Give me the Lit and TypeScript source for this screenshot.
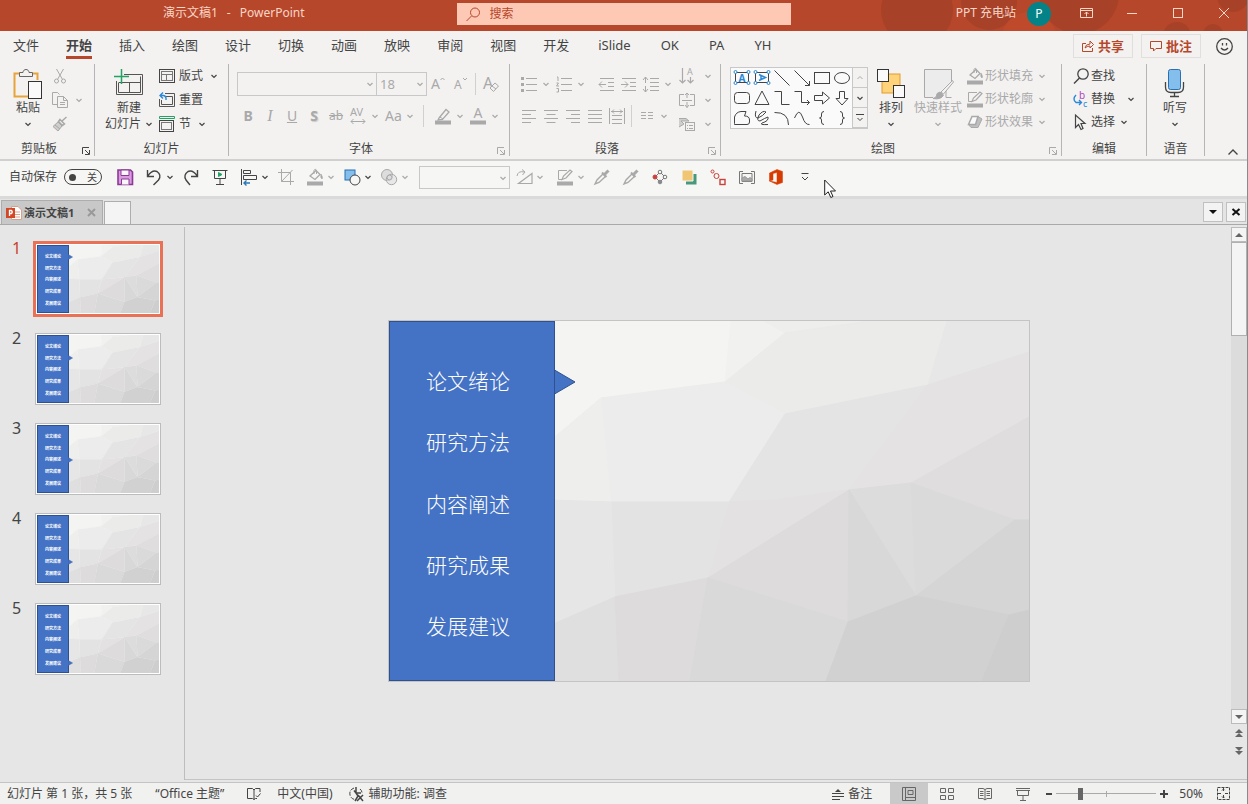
import { LitElement, html, svg, css, nothing, TemplateResult } from "lit";
import { customElement, property, state } from "lit/decorators.js";
import { classMap } from "lit/directives/class-map.js";

type Art = ReturnType<typeof svg>;

const icon = (w: number, h: number, art: Art) =>
  html`<svg class="ic" width=${w} height=${h} viewBox="0 0 ${w} ${h}" aria-hidden="true">${art}</svg>`;
const i16 = (art: Art) => icon(16, 16, art);
const chev = html`<svg class="chev" width="8" height="8" viewBox="0 0 8 8" aria-hidden="true"><path d="M1.5 3L4 5.5L6.5 3"/></svg>`;

/* ---- ribbon artwork ---- */
const art = {
  paste: svg`<path d="M9 5.500H2.500V28.500H16M21 5.500H25.500V12" stroke="#e8a33d" stroke-width="2"/><path d="M7.500 8.500V4.500H11C11 0.500 17 0.500 17 4.500H20.500V8.500Z" fill="#f3f2f1" stroke="#666"/><rect x="16.500" y="13.500" width="13" height="17" fill="#fafafa" stroke="#333"/>`,
  cut: svg`<path d="M4.500 1L10.500 11.500M11.500 1L5.500 11.500"/><circle cx="4.500" cy="13" r="2"/><circle cx="11.500" cy="13" r="2"/>`,
  copy: svg`<path d="M5 12.500H0.500V0.500H5.500L7.500 2.500"/><path d="M5.500 4.500H11.500L15.500 8.500V15.500H5.500ZM11.500 4.500V8.500H15.500M8 10.500H13M8 12.500H13"/>`,
  brush: svg`<path d="M14.500 1L10 5M8 3.500L12.500 8L10.500 9.500L6.500 5.500Z" stroke-width="1.500"/><path d="M6 6L10 10L6 15L1 10.500Z" fill="currentColor" fill-opacity=".5"/><path d="M3 9L8 13"/>`,
  newSlide: svg`<path d="M11 6.500H29.500V26.500H3.500V13M27.500 8.500V24.500H5.500V15M5.500 14.500H27.500M16.500 14.500V24.500" stroke="#555"/><path d="M8.500 1V16M1 8.500H16" stroke="#21a366" stroke-width="1.500"/>`,
  layout: svg`<rect x=".5" y="1.500" width="15" height="13" stroke="#444"/><rect x="2.500" y="3.500" width="11" height="9" stroke="#777"/><path d="M3 6.500H13M7.500 6.500V12" stroke="#777"/>`,
  reset: svg`<path d="M6 1.500H15.500V14.500H.5V7M7 4.500H13.500V12.500H2.500V8" stroke="#555"/><path d="M4 .5L1 3.500L4 6.500M1 3.500H4.500Q7.500 4 7 8" stroke="#2b88d8" stroke-width="1.400"/>`,
  section: svg`<path d="M.5 .5H15.500V2.500H.5Z" stroke="#21a366"/><rect x=".5" y="4.500" width="14" height="11" stroke="#444"/><rect x="2.500" y="6.500" width="10" height="7" stroke="#777"/>`,
  growA: svg`<text x="0" y="13" font-size="14">A</text><path d="M9.500 4L11.500 2L13.500 4"/>`,
  shrinkA: svg`<text x="1" y="13" font-size="12">A</text><path d="M10 2L12 4L14 2"/>`,
  clearA: svg`<text x="0" y="13" font-size="16">A</text><path d="M7 12L12 7L15.500 10L10.500 15.500Z" fill="#f3f2f1"/><path d="M9 10L13 13"/>`,
  av: svg`<text x="0" y="8" font-size="11">AV</text><path d="M1 13.500H15M3.500 11L1 13.500L3.500 16M12.500 11L15 13.500L12.500 16"/>`,
  marker: svg`<path d="M4 10L11 1.500L14 4L7.500 11.500L3 12Z" stroke-width="1.300"/><path d="M5 9L8 11"/><path d="M0 14.500H16" stroke-width="4"/>`,
  fontColor: svg`<text x="3.500" y="10" font-size="14">A</text><path d="M0 14.500H16" stroke-width="4"/>`,
  bullets: svg`<path d="M5 2.500H16M5 8.500H16M5 14.500H16"/><path d="M0 2.500H3M0 8.500H3M0 14.500H3" stroke-width="3"/>`,
  numbers: svg`<path d="M5 2.500H16M5 8.500H16M5 14.500H16"/><path d="M1 1H2V5M.5 7H2.500L.5 10H3M.5 12.500H2.500V16H.5"/>`,
  outdent: svg`<path d="M1 2.500H15M9 6.500H15M9 10.500H15M1 14.500H15M0 8.500H7M3 5.500L0 8.500L3 11.500"/>`,
  indent: svg`<path d="M1 2.500H15M9 6.500H15M9 10.500H15M1 14.500H15M0 8.500H7M4 5.500L7 8.500L4 11.500"/>`,
  spacing: svg`<path d="M7 2.500H16M7 6.500H16M7 10.500H16M7 14.500H16M2.500 1V7M2.500 10V16M0 4L2.500 1L5 4M0 13L2.500 16L5 13"/>`,
  left: svg`<path d="M1 2.500H15M1 6.500H10M1 10.500H15M1 14.500H10"/>`,
  center: svg`<path d="M1 2.500H15M3.500 6.500H12.500M1 10.500H15M3.500 14.500H12.500"/>`,
  right: svg`<path d="M1 2.500H15M6 6.500H15M1 10.500H15M6 14.500H15"/>`,
  justify: svg`<path d="M1 2.500H15M1 6.500H15M1 10.500H15M1 14.500H15"/>`,
  distribute: svg`<path d="M.5 0V16M15.500 0V16M3 7.500H13M3 11.500H13M3 15.500H13M2 3.500H14M5 1.500L3 3.500L5 5.500M11 1.500L13 3.500L11 5.500"/>`,
  columns: svg`<path d="M2 4.500H7M2 7.500H7M2 10.500H7M9 4.500H14M9 7.500H14M9 10.500H14"/>`,
  textDir: svg`<path d="M3.500 0V15M.5 12L3.500 15L6.500 12M11.500 9V15M8.500 12L11.500 15L14.500 12" stroke-width="1.200"/><text x="8" y="7" font-size="9">A</text>`,
  alignText: svg`<path d="M5 2.500H.5V13.500H5M11 2.500H15.500V13.500H11M3 8.500H13M8 1V6M6 3L8 1L10 3M8 10V15.500M6 13L8 15.500L10 13"/>`,
  smartArt: svg`<path d="M0 2.500H7L10 5H2L5 8L0 11" fill="currentColor" fill-opacity=".5"/><rect x="6.500" y="6.500" width="9" height="8" fill="#f3f2f1"/><path d="M8 9.500H9M8 12.500H9M10 9.500H14M10 12.500H14"/>`,
  arrange: svg`<rect x="7" y="6" width="18" height="19" fill="#ffd37a" stroke="#e39a2e"/><rect x="2.500" y="1.500" width="11" height="12" fill="#fafafa" stroke="#333"/><rect x="18.500" y="17.500" width="11" height="12" fill="#fafafa" stroke="#333"/>`,
  quick: svg`<path d="M11 29.500H2.500V1.500H29.500V13" fill="#ececec"/><path d="M29.500 29.500H24V22"/><path d="M30.500 12.500L19 24L21.500 26L31.500 14Z" fill="#f3f2f1"/><path d="M18 24Q14 25 14.500 28Q13 30 11 30.500Q19 32 21.500 27Z" fill="currentColor"/>`,
  fill: svg`<path d="M3 7L9 1.500L13 5.500L8 10.500Z" stroke-width="1.300"/><path d="M7 5V1.500Q8.500 -1.500 9.500 2.500V5"/><path d="M14 5Q16.500 9 15 10Q13 9 14 5Z" fill="currentColor" stroke-width=".6"/><path d="M0 14.500H16" stroke-width="4"/>`,
  outline: svg`<path d="M10 1.500H1.500V10.500H5"/><path d="M5 10.500L6.500 7L13 1L15 2.500L9 9Z" stroke-width="1.200"/><path d="M0 14.500H16" stroke-width="4"/>`,
  effect: svg`<path d="M11 2.500L15 5L11 13.500H4L1.500 10.500H8.500Z" fill="currentColor" fill-opacity=".7"/><path d="M5 2.500H11L8.500 10.500H1.500Z" fill="#fafafa" stroke-width="1.500"/>`,
  find: svg`<circle cx="10" cy="6" r="5.200" stroke="#444" stroke-width="1.300"/><path d="M6.500 10L1 15.500" stroke="#444" stroke-width="1.400"/>`,
  replace: svg`<text x="6" y="8" font-size="10" fill="#b146c2">b</text><text x="10" y="15.500" font-size="9" fill="#2b88d8">c</text><path d="M3 4Q-1 8 3 11.500H8M6 9L8.500 11.500L6 14" stroke="#2b88d8" stroke-width="1.400"/>`,
  select: svg`<path d="M2.500 1V13.500L5.500 10.500L8 15.500L10 14.500L8 9.500H12Z" stroke="#444" stroke-width="1.200"/>`,
  mic: svg`<rect x="9.500" y="1.500" width="12" height="20" rx="2" fill="#83beec" stroke="#2a6fb0"/><path d="M6.500 14V19Q6.500 24.500 12 24.500H19Q24.500 24.500 24.500 19V14M15.500 25V28M11 28.500H20" stroke="#444" stroke-width="1.300"/>`,
  launcher: svg`<path d="M7 .5H.5V7M3 3L7 7M7.500 3V7.500H3"/>`,
};

/* ---- quick access artwork ---- */
const quick = {
  save: svg`<path d="M1 1H13.500L15.500 3V15.500H1Z" fill="#d99ae0" stroke="#8a3a94" stroke-width="1.600"/><path d="M4 1H12V6.500H4ZM4.500 15.500V10H12V15.500" fill="#fbf6fb" stroke="#8a3a94"/>`,
  undo: svg`<path d="M1.500 1V7.500H8M1.500 7.500Q6 .5 11 2.500Q16 6 12.500 11L7.500 16" stroke="#444" stroke-width="1.400"/>`,
  redo: svg`<path d="M14.500 1V7.500H8M14.500 7.500Q10 .5 5 2.500Q0 6 3 11L7 16" stroke="#444" stroke-width="1.400"/>`,
  show: svg`<path d="M.5 1.500H15.500M2.500 1.500V9.500H13.500V1.500M8 10V15.500M4 15.500H12" stroke="#444"/><path d="M6.500 3.500L10 5.500L6.500 7.500Z" fill="#21a366" stroke="#21a366"/>`,
  align: svg`<path d="M.5 0V16" stroke="#444"/><path d="M2.500 1.500H9.500V4.500H2.500ZM2.500 6.500H15.500V10.500H2.500Z" stroke="#444"/><path d="M3 14H9M5.500 11.500L3 14L5.500 16.500" stroke="#2b78b8" stroke-width="1.400"/>`,
  crop: svg`<path d="M3.500 0V12.500H16M0 3.500H12.500V16M14.500 1L3.500 12.500"/>`,
  shapes: svg`<rect x="1" y="1" width="10" height="10" fill="#83beec" stroke="#2a6fb0"/><circle cx="11" cy="11" r="5" fill="#f6f6f5" stroke="#444"/>`,
  merge: svg`<circle cx="6" cy="6" r="5.500" fill="#ddd"/><circle cx="10.500" cy="10.500" r="5.200" fill="#ddd" fill-opacity=".6"/><circle cx="8.500" cy="8.500" r="2.500"/>`,
  rotate: svg`<path d="M16 4.500V14.500H2.500Z" stroke-width="1.200"/><path d="M1 7Q2 1.500 8 3M6 .5L9 3L6.500 6"/>`,
  dropper: svg`<path d="M1 15L3 11L9 5L11.500 7.500L5 13.500Z" stroke-width="1.400"/><path d="M8 3.500L12.500 8" stroke-width="2"/><path d="M10.500 5.500L14.500 1.500" stroke-width="3"/>`,
  nodes: svg`<path d="M8 3L13 8L8 13L3 8Z" stroke="#777"/><circle cx="8" cy="3" r="1.800" fill="#f6f6f5" stroke="#777"/><circle cx="3" cy="8" r="2" fill="#c8413b" stroke="#c8413b"/><circle cx="13" cy="8" r="1.800" fill="#f6f6f5" stroke="#777"/><circle cx="8" cy="13" r="1.800" fill="#888" stroke="#888"/>`,
  layers: svg`<path d="M5 5H15.500V15.500H5Z" fill="#47997c" stroke="none"/><path d="M1 1H12V12H1Z" fill="#f0c674" stroke="#f6f6f5"/>`,
  chain: svg`<path d="M3 3L12 12" stroke="#ddd"/><circle cx="2.500" cy="2.500" r="1.500" fill="#f6f6f5" stroke="#c8413b"/><circle cx="6.500" cy="7" r="2.500" fill="#f6f6f5" stroke="#c8413b"/><rect x="10" y="10.500" width="5" height="5" fill="#f6f6f5" stroke="#c8413b" stroke-width="1.400"/>`,
  picture: svg`<path d="M4 2.500H.5V14.500H4M12 2.500H15.500V14.500H12M3 4.500H13V12.500H3Z" stroke="#777"/><path d="M3 12V9L6 7.500L9 10L11 8.500L13 10V12Z" fill="#aaa" stroke="#999"/>`,
  office: svg`<path d="M1.500 4L9 .5L14.500 2.500V13.500L9 15.500L1.500 12L9 13.500V3.500L5 4.500V11L1.500 12Z" fill="#d83b01" stroke="#d83b01" stroke-width=".5"/>`,
  more: svg`<path d="M4.500 4.500H11.500M5 8L8 11L11 8" stroke="#444"/>`,
};

const handles = svg`<g fill="#fafafa" stroke="#2b88d8"><circle cx="2.500" cy="3" r="1.500"/><circle cx="15.500" cy="3" r="1.500"/><circle cx="2.500" cy="14" r="1.500"/><circle cx="15.500" cy="14" r="1.500"/></g>`;
const shapeArt: Art[] = [
  svg`<rect x="2.500" y="3.500" width="13" height="10"/><text x="5.500" y="12.500" font-size="10" fill="#2b88d8" font-weight="700">A</text>${handles}`,
  svg`<rect x="2.500" y="3.500" width="13" height="10"/><path d="M6 5.500L12.500 8.500L6 11.500M8 6.500V10.500" stroke="#2b88d8" stroke-width="1.500"/>${handles}`,
  svg`<path d="M1.500 1.500L16.500 16.500"/>`,
  svg`<path d="M1.500 1.500L16.500 16.500M16.500 12V16.500H12"/>`,
  svg`<rect x="1.500" y="3.500" width="15" height="11"/>`,
  svg`<ellipse cx="9" cy="9" rx="7.500" ry="5.500"/>`,
  svg`<rect x="1.500" y="3.500" width="15" height="11" rx="3"/>`,
  svg`<path d="M9 2L16 15.500H2Z"/>`,
  svg`<path d="M1.500 2.500H8.500V15.500H16.500"/>`,
  svg`<path d="M1.500 2.500H8.500V13.500H16.500M14 11L16.500 13.500L14 16"/>`,
  svg`<path d="M1.500 6.500H9.500V3L16.500 9L9.500 15V11.500H1.500Z"/>`,
  svg`<path d="M6.500 2.500H11.500V9.500H15L9 16L3 9.500H6.500Z"/>`,
  svg`<path d="M1.500 14.500V8Q3 3 8 2.500H13L11.500 7Q16.500 7 16.500 11V13Q16.500 15.500 14 15.500H1.500Z"/>`,
  svg`<path d="M3 2Q1 9 5 9Q10 7 13 3Q10 1 6 6Q3 12 7 12Q12 9 15 8Q16 12 9 14Q6 16 15 15.500"/>`,
  svg`<path d="M1.500 3.500Q15.500 3 15.500 16"/>`,
  svg`<path d="M1.500 9Q6 -2 9.500 8Q12 16 16.500 15.500"/>`,
  svg`<path d="M11 2.500Q8.500 2.500 8.500 5V7Q8.500 9 6.500 9Q8.500 9 8.500 11V13Q8.500 15.500 11 15.500"/>`,
  svg`<path d="M7 2.500Q9.500 2.500 9.500 5V7Q9.500 9 11.500 9Q9.500 9 9.500 11V13Q9.500 15.500 7 15.500"/>`,
];

const facets: [string, string][] = [
  ["160,0 342,0 336,61 212,77 160,121", "#f4f4f2"],
  ["342,0 375,0 396,12 336,61", "#f1f1f0"],
  ["375,0 480,0 396,12", "#eeeeed"],
  ["336,61 396,12 480,0 558,0 539,64 396,93", "#ebebea"],
  ["558,0 640,0 640,31 539,64", "#e7e7e7"],
  ["212,77 336,61 396,93 340,181 222,181", "#ececec"],
  ["160,121 212,77 222,181 160,179", "#eeeeed"],
  ["396,93 539,64 460,169 386,179 340,181", "#e4e4e4"],
  ["539,64 640,31 640,96 522,162 460,169", "#e4e2e3"],
  ["640,96 640,199 626,199 522,162", "#dfddde"],
  ["340,181 386,179 460,169 319,257", "#e3e1e2"],
  ["222,181 340,181 319,257 226,276", "#e3e3e3"],
  ["160,179 222,181 226,276 160,305", "#e6e6e6"],
  ["319,257 460,169 459,301", "#dddbdc"],
  ["460,169 522,162 527,275", "#dddcdc"],
  ["460,169 527,275 459,301", "#d9d8d9"],
  ["522,162 626,199 527,275", "#dbdadb"],
  ["626,199 640,199 640,289 620,294 527,275", "#d5d5d5"],
  ["160,305 226,276 230,360 160,360", "#e0dfdf"],
  ["226,276 319,257 301,360 230,360", "#dddbdc"],
  ["319,257 459,301 437,360 301,360", "#d9d9d9"],
  ["459,301 527,275 620,294 593,360 437,360", "#d1d1d1"],
  ["620,294 640,289 640,360 593,360", "#cecece"],
];

const chapters = ["论文绪论", "研究方法", "内容阐述", "研究成果", "发展建议"];

@customElement("deck-slide")
export class DeckSlide extends LitElement {
  @property({ type: Number }) active = 0;
  @property({ type: Boolean, reflect: true }) small = false;

  static styles = css`
    :host { display: grid; aspect-ratio: 16 / 9; font: 300 21px/30px "Noto Sans CJK SC", sans-serif; overflow: hidden; }
    .backdrop, .nav { grid-area: 1 / 1; }
    .backdrop { width: 100%; height: 100%; display: block; min-height: 0; }
    .nav {
      box-sizing: border-box; width: 26%; margin: 0; padding: 30px 0 22px; list-style: none;
      display: flex; flex-direction: column; background: #4472c4; border: 1px solid #2f528f; color: #fff; z-index: 1;
    }
    .item { flex: 1; display: flex; align-items: center; padding: 0 0 4px 36px; position: relative; }
    .arrow { position: absolute; left: 100%; top: 0; bottom: 0; margin: auto 0; width: 22px; height: 26px; }
    .arrow path { fill: #4472c4; stroke: #2f528f; }
    :host([small]) { font-size: 4px; line-height: 5px; font-weight: 700; }
    :host([small]) .nav { padding: 5px 0 3px; }
    :host([small]) .item { padding: 0 0 0 7px; }
    :host([small]) .arrow { width: 5px; height: 6px; }
  `;

  render() {
    return html`
      <svg class="backdrop" viewBox="0 0 640 360" preserveAspectRatio="none" aria-hidden="true">
        ${facets.map(([points, fill]) => svg`<polygon points=${points} fill=${fill} stroke=${fill}/>`)}
      </svg>
      <ul class="nav">
        ${chapters.map((name, i) => html`<li class="item">${name}${i === this.active
          ? html`<svg class="arrow" viewBox="0 0 22 26"><path d="M.5 1L21 13L.5 25Z"/></svg>` : nothing}</li>`)}
      </ul>`;
  }
}

@customElement("app-root")
export class AppRoot extends LitElement {
  @state() private current = 0;
  @state() private tab = "开始";

  static styles = css`
    :host {
      display: flex; flex-direction: column; box-sizing: border-box; min-height: 100vh;
      border-right: 1px solid #8a8a8a; background: #e6e6e6; color: #444;
      font: 12px/16px "Noto Sans", "Noto Sans CJK SC", sans-serif;
    }
    button, select, input { font: inherit; color: inherit; margin: 0; }
    button { background: none; border: 0; padding: 0; display: flex; align-items: center; white-space: nowrap; }
    svg { flex: none; display: block; overflow: visible; }
    .ic, .chev { fill: none; stroke: currentColor; }
    .ic text { stroke: none; }
    .ic text:not([fill]) { fill: currentColor; }
    .chev { stroke-width: 1.2; }
    .off { color: #a9a9a9; }

    .title { display: grid; grid-template-columns: 1fr minmax(120px, 334px) 1fr; height: 31px; background: #b7472a; color: #fbd5c6; position: relative; overflow: hidden; }
    .texture { position: absolute; right: 0; top: 0; fill: #953b26; }
    .doc { display: flex; justify-content: center; gap: 9px; padding: 5px 0 0 11px; }
    .search { display: flex; align-items: center; gap: 9px; height: 22px; margin-top: 3px; padding-left: 9px; background: #fdc9b5; color: #b7472a; box-sizing: border-box; }
    .search input { flex: 1; min-width: 0; border: 0; background: none; padding: 0; outline: 0; }
    .search input::placeholder { color: #b7472a; opacity: 1; }
    .account { display: flex; justify-content: flex-end; align-items: flex-start; position: relative; }
    .account .name { padding: 5px 11px 0 0; }
    .avatar { width: 24px; height: 24px; margin: 2px 12px 0 0; border-radius: 50%; background: #038387; color: #fff; justify-content: center; }
    .win { width: 46px; height: 26px; justify-content: center; }

    .tabs { display: flex; align-items: center; height: 31px; background: #f3f2f1; font-size: 13px; line-height: 18px; padding-right: 14px; }
    .tab { height: 31px; padding: 0 13px 3px; margin-right: 1px; box-sizing: border-box; }
    .tab.latin { padding: 0 15px 3px; margin: 0; }
    .tab span { padding: 5px 0 2px; border-bottom: 3px solid transparent; }
    .tab.on { font-weight: 700; }
    .tab.on span { border-color: #b7472a; }
    .spring { flex: 1; }
    .act { height: 24px; border: 1px solid #e1dfdd; padding: 0 8px; gap: 4px; margin-right: 8px; margin-bottom: 1px; color: #b7472a; font-weight: 700; box-sizing: border-box; }
    .smile { margin-left: 7px; margin-bottom: 1px; }

    .ribbon { display: flex; background: #f3f2f1; border-bottom: 2px solid #d0d0d0; padding: 2px 0 3px; height: 92px; }
    .group { display: flex; flex-direction: column; border-right: 1px solid #b5b5b5; }
    .body { flex: 1; display: flex; align-items: flex-start; }
    .foot { display: flex; align-items: center; height: 14px; line-height: 14px; }
    .foot span { flex: 1; text-align: center; }
    .foot button { width: 16px; height: 14px; padding: 5px 4px 0; box-sizing: border-box; align-items: flex-start; }
    .big { flex-direction: column; padding-top: 4px; }
    .big span { display: flex; align-items: center; gap: 4px; height: 16px; }
    .rows { display: flex; flex-direction: column; }
    .rows button { height: 24px; gap: 4px; padding: 0; }
    .rows .chev { margin-left: 3px; }
    .rows.tight button { height: 23px; gap: 2px; }
    .clip .body { padding: 0 11px 0 12px; gap: 8px; }
    .slides .body { padding: 0 10px 0 10px; gap: 6px; }
    .font .body { padding: 8px 7px 0 8px; }
    .para .body { padding: 0 8px; }
    .para .tools { padding-top: 8px; width: 161px; }
    .tools { display: flex; flex-direction: column; gap: 8px; }
    .line { display: flex; align-items: center; height: 24px; }
    .tool { padding: 0 3px; height: 22px; }
    .tool .chev { margin-left: 5px; }
    .letter { width: 16px; text-align: center; font-size: 14px; }
    .b { font-weight: 700; } .i { font-style: italic; font-family: "Liberation Serif", serif; font-size: 16px; }
    .u { text-decoration: underline; } .s { text-decoration: line-through; font-size: 12px; }
    .sh { font-weight: 700; text-shadow: 1px 1px 1px #ccc; }
    .bar { width: 1px; height: 22px; background: #d0d0d0; margin: 0 8px 0 6px; }
    .bar.near { margin: 0 4px 0 3px; }
    .shift { margin-left: 8px; }
    .combo { display: grid; align-items: center; height: 24px; box-sizing: border-box; border: 1px solid #c8c8c8; color: #a9a9a9; }
    .combo select { grid-area: 1 / 1; appearance: none; border: 0; background: none; padding: 0 3px; width: 100%; height: 22px; line-height: 22px; font-size: 13px; }
    .combo .chev { grid-area: 1 / 1; justify-self: end; margin-right: 2px; pointer-events: none; }
    .face { width: 140px; } .size { width: 51px; margin-left: -1px; margin-right: 1px; }
    .draw .body { padding: 0 15px 0 9px; }
    .gallery { display: grid; grid-template-columns: 1fr 15px; border: 1px solid #c8c8c8; margin-top: 3px; height: 60px; }
    .shapes { display: grid; grid-template-columns: repeat(6, 20px); background: #fafafa; padding-left: 1px; }
    .shapes button { justify-content: center; height: 20px; }
    .scroller { display: grid; grid-template-rows: repeat(3, 20px); }
    .scroller button { justify-content: center; border-left: 1px solid #c8c8c8; border-bottom: 1px solid #c8c8c8; }
    .arr { margin-left: 7px; } .qk { margin: 0 5px 0 7px; }
    .edit .body { padding: 0 12px 0 11px; }
    .edit .wide .chev { margin-left: 10px; }
    .edit .rows { width: 61px; }
    .voice .body { padding: 0 13px 0 12px; }
    .fold { margin-left: auto; align-self: flex-end; padding-right: 8px; }

    .qat { display: flex; align-items: center; height: 32px; padding: 0 0 3px 9px; background: #f6f6f5; border-bottom: 3px solid #dadada; position: relative; }
    .auto { display: flex; align-items: center; gap: 7px; margin-right: 9px; }
    .switch { display: flex; align-items: center; position: relative; box-sizing: border-box; width: 38px; height: 16px; border: 1px solid #444; border-radius: 8px; padding: 0 4px; font-size: 10px; line-height: 12px; justify-content: space-between; }
    .switch input { appearance: none; width: 7px; height: 7px; border-radius: 50%; background: #444; }
    .q { padding: 0 6px; width: 29px; box-sizing: border-box; height: 24px; }
    .q.drop { width: 37px; padding-right: 0; }
    .q .chev { margin-left: 4px; }
    .qat .combo { width: 91px; margin: 0 0 0 7px; height: 23px; }
    .next { margin-left: 4px; }
    .pointer { position: absolute; left: 824px; top: 18px; z-index: 2; }

    .files { display: flex; align-items: flex-end; height: 25px; border-bottom: 1px solid #a9a9a9; background: #e4e4e4; padding: 0 1px; }
    .file { display: flex; align-items: center; gap: 2px; height: 24px; padding: 0 6px 0 4px; box-sizing: border-box; width: 102px; background: #c8c8c8; border: 1px solid #adadad; border-bottom: 0; font-weight: 700; font-size: 11px; white-space: nowrap; }
    .file button { color: #999; margin-left: auto; }
    .blank { width: 27px; height: 23px; margin-left: 1px; box-sizing: border-box; background: #f4f4f4; border: 1px solid #adadad; border-bottom: 0; }
    .sq { width: 20px; height: 20px; box-sizing: border-box; border: 1px solid #c0c0c0; background: #f3f3f3; justify-content: center; align-self: center; color: #111; margin-left: 3px; }

    .main { flex: 1; display: flex; padding: 2px 0 2px; border-bottom: 1px solid #c4c4c4; }
    .pane { box-sizing: border-box; width: 185px; border-right: 1px solid #bdbdbd; margin: 0; padding: 16px 23px 0 12px; list-style: none; display: flex; flex-direction: column; gap: 18px; }
    .pane li { display: grid; grid-template-columns: 23px 1fr; font-size: 16px; line-height: 10px; align-items: start; }
    .thumb { display: block; border: 1px solid #bcbcbc; background: #fff; padding: 1px; width: 126px; height: 72px; box-sizing: border-box; }
    .thumb deck-slide { width: 122px; height: 68px; aspect-ratio: auto; }
    .now .num { color: #c8432b; }
    .now .thumb { border-color: #e97156; outline: 2px solid #e97156; }
    .stage { flex: 1; display: flex; align-items: center; justify-content: center; border-bottom: 1px solid #c4c4c4; padding: 0 0 5px 2px; box-sizing: border-box; }
    .stage deck-slide { width: 640px; border: 1px solid #c4c4c4; }
    .scroll { width: 16px; display: flex; flex-direction: column; align-items: stretch; border-bottom: 1px solid #c4c4c4; color: #666; }
    .scroll button { justify-content: center; height: 15px; border: 1px solid #bbb; background: #f4f4f4; }
    .scroll .plain { border: 0; background: none; height: 18px; }
    .track { flex: 1; background: #dcdcdc; }
    .grip { height: 92px; border: 1px solid #b0b0b0; background: #f4f4f4; }
    .end { height: 19px; }

    .status { display: flex; align-items: center; height: 21px; background: #f1f1f0; padding: 0 17px 0 7px; white-space: nowrap; }
    .gap { margin-left: 16px; } .gapl { margin-left: 23px; }
    .status button { height: 21px; gap: 4px; }
    .views { display: flex; margin-left: 18px; }
    .views button { width: 38px; justify-content: center; color: #666; }
    .views .on { background: #c9c9c9; }
    .zoom { display: flex; align-items: center; gap: 4px; margin-left: 4px; }
    .zoom input { appearance: none; width: 100px; height: 12px; background: linear-gradient(#aaa, #aaa) center / 100% 1px no-repeat, linear-gradient(#aaa, #aaa) center / 1px 6px no-repeat; }
    .zoom input::-webkit-slider-thumb { appearance: none; width: 5px; height: 12px; background: #666; }
    .pct { margin: 0 14px 0 11px; }
  `;

  private tool(name: string, a: Art, drop = false, extra = "") {
    return html`<button class="tool ${extra}" aria-label=${name}>${i16(a)}${drop ? chev : nothing}</button>`;
  }
  private letter(name: string, text: string, cls: string, drop = false) {
    return html`<button class="tool" aria-label=${name}><span class="letter ${cls}">${text}</span>${drop ? chev : nothing}</button>`;
  }
  private row(text: string, a: Art, drop = false, cls = "") {
    return html`<button class=${cls}>${i16(a)}${text}${drop ? chev : nothing}</button>`;
  }
  private q(name: string, a: Art, drop = false, cls = "") {
    return html`<button class="q ${drop ? "drop" : ""} ${cls}" aria-label=${name}>${i16(a)}${drop ? chev : nothing}</button>`;
  }
  private group(cls: string, label: string, body: TemplateResult, launch = "") {
    return html`<section class="group ${cls}"><div class="body">${body}</div>
      <div class="foot"><span>${label}</span>${launch ? html`<button class=${launch} aria-label="${label}选项">${icon(8, 8, art.launcher)}</button>` : nothing}</div></section>`;
  }

  private renderTitle() {
    return html`<header class="title">
      <svg class="texture" width="430" height="31" viewBox="0 0 430 31" aria-hidden="true">
        <g opacity=".45"><circle cx="100" cy="10" r="36"/><circle cx="172" cy="2" r="28"/><circle cx="262" cy="-6" r="40"/><circle cx="360" cy="36" r="14"/><circle cx="396" cy="34" r="10"/><circle cx="416" cy="-4" r="16"/></g>
        <circle cx="212" cy="40" r="28" fill="#bf492b"/>
      </svg>
      <div class="doc"><span>演示文稿1</span><span>-</span><span>PowerPoint</span></div>
      <label class="search">${icon(15, 15, svg`<circle cx="9" cy="5.500" r="4.500"/><path d="M5.500 9L.5 14"/>`)}<input aria-label="搜索" placeholder="搜索"></label>
      <div class="account">
        <span class="name">PPT 充电站</span><button class="avatar">P</button>
        <button class="win" aria-label="功能区显示选项">${icon(13, 10, svg`<path d="M.5 .5H12.500V9.500H.5ZM.5 2.500H12.500M6.500 8.500V4M4.500 6L6.500 4L8.500 6"/>`)}</button>
        <button class="win" aria-label="最小化">${icon(10, 10, svg`<path d="M0 5.500H10"/>`)}</button>
        <button class="win" aria-label="最大化">${icon(10, 10, svg`<rect x=".5" y=".5" width="9" height="9"/>`)}</button>
        <button class="win" aria-label="关闭">${icon(10, 10, svg`<path d="M0 0L10 10M10 0L0 10"/>`)}</button>
      </div>
    </header>`;
  }

  private renderTabs() {
    const names = ["文件", "开始", "插入", "绘图", "设计", "切换", "动画", "放映", "审阅", "视图", "开发", "iSlide", "OK", "PA", "YH"];
    return html`<nav class="tabs">
      ${names.map((n) => html`<button class=${classMap({ tab: true, on: n === this.tab, latin: /^\w+$/.test(n) })} @click=${() => (this.tab = n)}><span>${n}</span></button>`)}
      <div class="spring"></div>
      <button class="act">${icon(12, 12, svg`<path d="M4 3.500H.5V11.500H10.500V8M3 8Q3.500 4 8 4V1L11.500 4.500L8 8V6Q5 6 3 8Z"/>`)}共享</button>
      <button class="act">${icon(12, 12, svg`<path d="M.5 1.500H11.500V8.500H6L3.500 11V8.500H.5Z"/>`)}批注</button>
      <button class="smile" aria-label="反馈">${icon(17, 17, svg`<circle cx="8.500" cy="8.500" r="7.800" stroke-width="1.300"/><path d="M5 10Q8.500 14 12 10M6.500 5V7.500M10.500 5V7.500" stroke-width="1.300"/>`)}</button>
    </nav>`;
  }

  private renderRibbon() {
    return html`<div class="ribbon">
      ${this.group("clip", "剪贴板", html`
        <button class="big">${icon(32, 32, art.paste)}<span>粘贴</span><span>${chev}</span></button>
        <div class="rows off">
          <button aria-label="剪切">${i16(art.cut)}</button>
          <button aria-label="复制">${i16(art.copy)}${chev}</button>
          <button aria-label="格式刷">${i16(art.brush)}</button>
        </div>`, "on")}
      ${this.group("slides", "幻灯片", html`
        <button class="big">${icon(32, 32, art.newSlide)}<span>新建</span><span>幻灯片${chev}</span></button>
        <div class="rows">${this.row("版式", art.layout, true)}${this.row("重置", art.reset)}${this.row("节", art.section, true)}</div>`)}
      ${this.group("font", "字体", html`
        <div class="tools off">
          <div class="line">
            <div class="combo face"><select aria-label="字体"><option></option></select>${chev}</div>
            <div class="combo size"><select aria-label="字号"><option>18</option></select>${chev}</div>
            ${this.tool("增大字号", art.growA)}${this.tool("减小字号", art.shrinkA)}<div class="bar near"></div>${this.tool("清除格式", art.clearA)}
          </div>
          <div class="line">
            ${this.letter("加粗", "B", "b")}${this.letter("倾斜", "I", "i")}${this.letter("下划线", "U", "u")}${this.letter("阴影", "S", "sh")}${this.letter("删除线", "ab", "s")}
            ${this.tool("字符间距", art.av, true)}${this.letter("更改大小写", "Aa", "", true)}<div class="bar"></div>
            ${this.tool("突出显示", art.marker, true)}${this.tool("字体颜色", art.fontColor, true)}
          </div>
        </div>`, "off")}
      ${this.group("para", "段落", html`
        <div class="tools off">
          <div class="line">${this.tool("项目符号", art.bullets, true)}${this.tool("编号", art.numbers, true)}${this.tool("减少缩进", art.outdent, false, "shift")}${this.tool("增加缩进", art.indent)}${this.tool("行距", art.spacing, true)}</div>
          <div class="line">${this.tool("左对齐", art.left)}${this.tool("居中", art.center)}${this.tool("右对齐", art.right)}${this.tool("两端对齐", art.justify)}${this.tool("分散对齐", art.distribute)}<div class="bar near"></div>${this.tool("分栏", art.columns, true)}</div>
        </div>
        <div class="rows off">
          <button class="tool" aria-label="文字方向">${i16(art.textDir)}${chev}</button>
          <button class="tool" aria-label="对齐文本">${i16(art.alignText)}${chev}</button>
          <button class="tool" aria-label="转换为 SmartArt">${i16(art.smartArt)}${chev}</button>
        </div>`, "off")}
      ${this.group("draw", "绘图", html`
        <div class="gallery">
          <div class="shapes">${shapeArt.map((a, i) => html`<button aria-label="形状 ${i + 1}">${icon(18, 18, a)}</button>`)}</div>
          <div class="scroller">
            <button class="off" aria-label="上一行">${icon(8, 8, svg`<path d="M1.500 5L4 2.500L6.500 5"/>`)}</button>
            <button aria-label="下一行">${chev}</button>
            <button aria-label="其他形状">${icon(8, 8, svg`<path d="M0 .5H8M1.500 4L4 6.500L6.500 4"/>`)}</button>
          </div>
        </div>
        <button class="big arr">${icon(32, 32, art.arrange)}<span>排列</span><span>${chev}</span></button>
        <button class="big qk off">${icon(32, 32, art.quick)}<span>快速样式</span><span>${chev}</span></button>
        <div class="rows tight off">${this.row("形状填充", art.fill, true)}${this.row("形状轮廓", art.outline, true)}${this.row("形状效果", art.effect, true)}</div>`, "off")}
      ${this.group("edit", "编辑", html`
        <div class="rows tight">${this.row("查找", art.find)}${this.row("替换", art.replace, true, "wide")}${this.row("选择", art.select, true)}</div>`)}
      ${this.group("voice", "语音", html`
        <button class="big">${icon(32, 32, art.mic)}<span>听写</span><span>${chev}</span></button>`)}
      <button class="fold" aria-label="折叠功能区">${icon(12, 8, svg`<path d="M1.500 6.500L6 2L10.500 6.500" stroke-width="1.400"/>`)}</button>
    </div>`;
  }

  private renderQuick() {
    return html`<div class="qat">
      <label class="auto">自动保存<span class="switch"><input type="checkbox">关</span></label>
      ${this.q("保存", quick.save)}${this.q("撤消", quick.undo, true)}${this.q("恢复", quick.redo)}${this.q("从头开始", quick.show)}
      ${this.q("对齐", quick.align, true)}${this.q("裁剪", quick.crop, false, "off")}${this.q("填充", art.fill, true, "off")}
      ${this.q("形状", quick.shapes, true)}${this.q("合并形状", quick.merge, true, "off")}
      <div class="combo"><select aria-label="动画样式"><option></option></select>${chev}</div>
      ${this.q("旋转", quick.rotate, true, "off")}${this.q("轮廓", art.outline, true, "off next")}
      ${this.q("取色器", quick.dropper, false, "off")}${this.q("轮廓取色器", quick.dropper, false, "off")}
      ${this.q("编辑顶点", quick.nodes, false, "off")}${this.q("上移一层", quick.layers)}${this.q("动画窗格", quick.chain)}
      ${this.q("图片", quick.picture)}${this.q("Office", quick.office)}${this.q("自定义", quick.more)}
      <svg class="pointer" width="13" height="20" viewBox="0 0 13 20" aria-hidden="true"><path d="M.7 1V16L4.200 12.800L6.800 18.500L9 17.500L6.500 12H11.500Z" fill="#fff" stroke="#222"/></svg>
    </div>`;
  }

  private renderFiles() {
    return html`<div class="files">
      <div class="file">${icon(16, 16, svg`<path d="M5.500 1.500H12L15.500 5V14.500H5.500Z" fill="#fff" stroke="#d9a08e"/><path d="M9 7H14M9 9.500H14M9 12H14" stroke="#d9a08e"/><rect x="0" y="3" width="9" height="10" fill="#d24726" stroke="none"/><path d="M3.500 11V5.500H5.500Q7 7 5.500 8.500H3.500" stroke="#fff" stroke-width="1.300"/>`)}演示文稿1
        <button aria-label="关闭文档">${icon(9, 9, svg`<path d="M1 1L8 8M8 1L1 8" stroke-width="2"/>`)}</button></div>
      <button class="blank" aria-label="新建文档"></button>
      <div class="spring"></div>
      <button class="sq" aria-label="文档列表">${icon(8, 8, svg`<path d="M0 2H8L4 6Z" fill="currentColor" stroke="none"/>`)}</button>
      <button class="sq" aria-label="关闭">${icon(8, 8, svg`<path d="M.5 1L7.500 7M7.500 1L.5 7" stroke-width="2"/>`)}</button>
    </div>`;
  }

  private renderMain() {
    const up = svg`<path d="M0 6L4 2L8 6Z" fill="currentColor" stroke="none"/>`;
    const down = svg`<path d="M0 2L4 6L8 2Z" fill="currentColor" stroke="none"/>`;
    return html`<main class="main">
      <ol class="pane">
        ${chapters.map((_, i) => html`<li class=${classMap({ now: i === this.current })}><span class="num">${i + 1}</span>
          <button class="thumb" aria-label="幻灯片 ${i + 1}" @click=${() => (this.current = i)}><deck-slide small .active=${i}></deck-slide></button></li>`)}
      </ol>
      <div class="stage"><deck-slide .active=${this.current}></deck-slide></div>
      <div class="scroll">
        <button aria-label="向上">${icon(8, 8, up)}</button>
        <div class="track"><div class="grip"></div></div>
        <button aria-label="向下">${icon(8, 8, down)}</button>
        <button class="plain" aria-label="上一张">${icon(8, 8, svg`<path d="M0 4L4 0L8 4ZM0 8L4 4L8 8Z" fill="currentColor" stroke="none"/>`)}</button>
        <button class="plain" aria-label="下一张">${icon(8, 8, svg`<path d="M0 0L4 4L8 0ZM0 4L4 8L8 4Z" fill="currentColor" stroke="none"/>`)}</button>
        <div class="end"></div>
      </div>
    </main>`;
  }

  private renderStatus() {
    return html`<footer class="status">
      <span>幻灯片 第 ${this.current + 1} 张，共 5 张</span>
      <span class="gapl">“Office 主题”</span>
      <button class="gapl" aria-label="拼写检查">${icon(14, 14, svg`<path d="M7 3V12.500L5.500 11.500H.5V1.500H5.500L7 3L8.500 1.500H13V5M7 12.500L8.500 11.500H10M9 8.500L10.500 10L13.500 6.500"/>`)}</button>
      <button class="gap">中文(中国)</button>
      <button class="gap">${icon(16, 16, svg`<path d="M5 2Q0 4 1 9Q2 13 6 13.500M11 3Q13 4.500 13 7" stroke-dasharray="4 1.500"/><path d="M7 1V7M5 4.500L7 7H12M7 7L9 10L6 15M9 9L14 15M14 9L8 15" stroke-width="1.500"/>`)}辅助功能: 调查</button>
      <div class="spring"></div>
      <button>${icon(12, 12, svg`<path d="M0 5.500H12M0 8.500H12M0 11.500H8"/><path d="M3 4L6 1L9 4Z" fill="currentColor" stroke="none"/>`)}备注</button>
      <div class="views">
        <button class="on" aria-label="普通视图">${icon(14, 14, svg`<path d="M.5 .5H13.500V13.500H.5ZM3.500 .5V13.500M6 3.500H11V7.500H6ZM4 10.500H13"/>`)}</button>
        <button aria-label="幻灯片浏览">${icon(14, 14, svg`<path d="M.5 1.500H5.500V5.500H.5ZM8.500 1.500H13.500V5.500H8.500ZM.5 8.500H5.500V12.500H.5ZM8.500 8.500H13.500V12.500H8.500Z"/>`)}</button>
        <button aria-label="阅读视图">${icon(14, 14, svg`<path d="M7 2.500V13M7 2.500L5 1.500H.5V11.500H5L7 13L9 11.500H13.500V1.500H9ZM2 4.500H5.500M2 6.500H5.500M2 8.500H5.500M8.500 4.500H12M8.500 6.500H12M8.500 8.500H12"/>`)}</button>
        <button aria-label="幻灯片放映">${icon(14, 14, svg`<path d="M0 1.500H14M0 3.500H14M1.500 3.500V8.500H12.500V3.500M7 8.500V13M4 13.500H10"/>`)}</button>
      </div>
      <div class="zoom">
        <button aria-label="缩小">${icon(6, 8, svg`<path d="M0 4H6" stroke-width="2"/>`)}</button>
        <input type="range" aria-label="缩放" min="0" max="100" value="23">
        <button aria-label="放大">${icon(8, 8, svg`<path d="M0 4H8M4 0V8" stroke-width="2"/>`)}</button>
      </div>
      <span class="pct">50%</span>
      <button aria-label="适应窗口">${icon(13, 13, svg`<path d="M.5 .5H12.500V12.500H.5ZM6.500 1V5M6.500 8V12M1 6.500H5M8 6.500H12M5 3.500L6.500 2L8 3.500M5 9.500L6.500 11L8 9.500" stroke-dasharray="3 1"/>`)}</button>
    </footer>`;
  }

  render() {
    return html`${this.renderTitle()}${this.renderTabs()}${this.renderRibbon()}${this.renderQuick()}${this.renderFiles()}${this.renderMain()}${this.renderStatus()}`;
  }
}
